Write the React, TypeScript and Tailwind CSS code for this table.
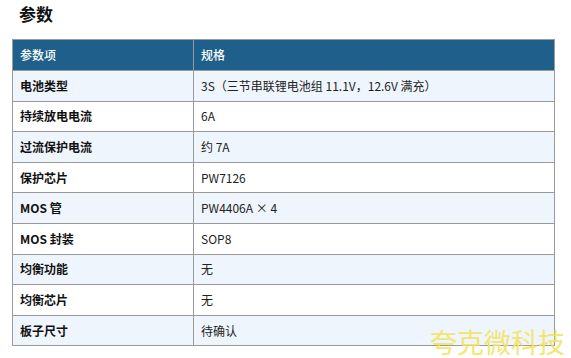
const rows: [string, string][] = [
  ["电池类型", "3S（三节串联锂电池组 11.1V，12.6V 满充）"],
  ["持续放电电流", "6A"],
  ["过流保护电流", "约 7A"],
  ["保护芯片", "PW7126"],
  ["MOS 管", "PW4406A × 4"],
  ["MOS 封装", "SOP8"],
  ["均衡功能", "无"],
  ["均衡芯片", "无"],
  ["板子尺寸", "待确认"],
];

export default function App() {
  return (
    <div
      className="relative w-[571px] h-[358px] overflow-hidden bg-white text-[#222]"
      style={{ fontFamily: '"Noto Sans CJK SC", "Noto Sans", sans-serif' }}
    >
      <h2 className="pl-[19px] pt-[2px] text-[17px] font-bold leading-[24px] text-[#111]">参数</h2>
      <table className="ml-[12px] mt-[13px] w-[543px] border-collapse text-[12px]">
        <thead>
          <tr className="h-[31px] bg-[#1e5f8b] text-white">
            <th className="w-[181px] border border-[#9a9a9a] px-[7px] text-left font-medium">参数项</th>
            <th className="border border-[#9a9a9a] px-[7px] text-left font-medium">规格</th>
          </tr>
        </thead>
        <tbody>
          {rows.map(([k, v], i) => (
            <tr key={k} className={i % 2 === 0 ? "h-[30.6px] bg-[#eef5fc]" : "h-[30.6px] bg-white"}>
              <td className="border border-[#9a9a9a] px-[7px] font-bold text-[#111]">{k}</td>
              <td className="border border-[#9a9a9a] px-[7px]">{v}</td>
            </tr>
          ))}
        </tbody>
      </table>
      <div className="absolute left-[430px] top-[328px] text-[27px] leading-[28px] text-[#f3e35c]/90 whitespace-nowrap">
        夸克微科技
      </div>
    </div>
  );
}
